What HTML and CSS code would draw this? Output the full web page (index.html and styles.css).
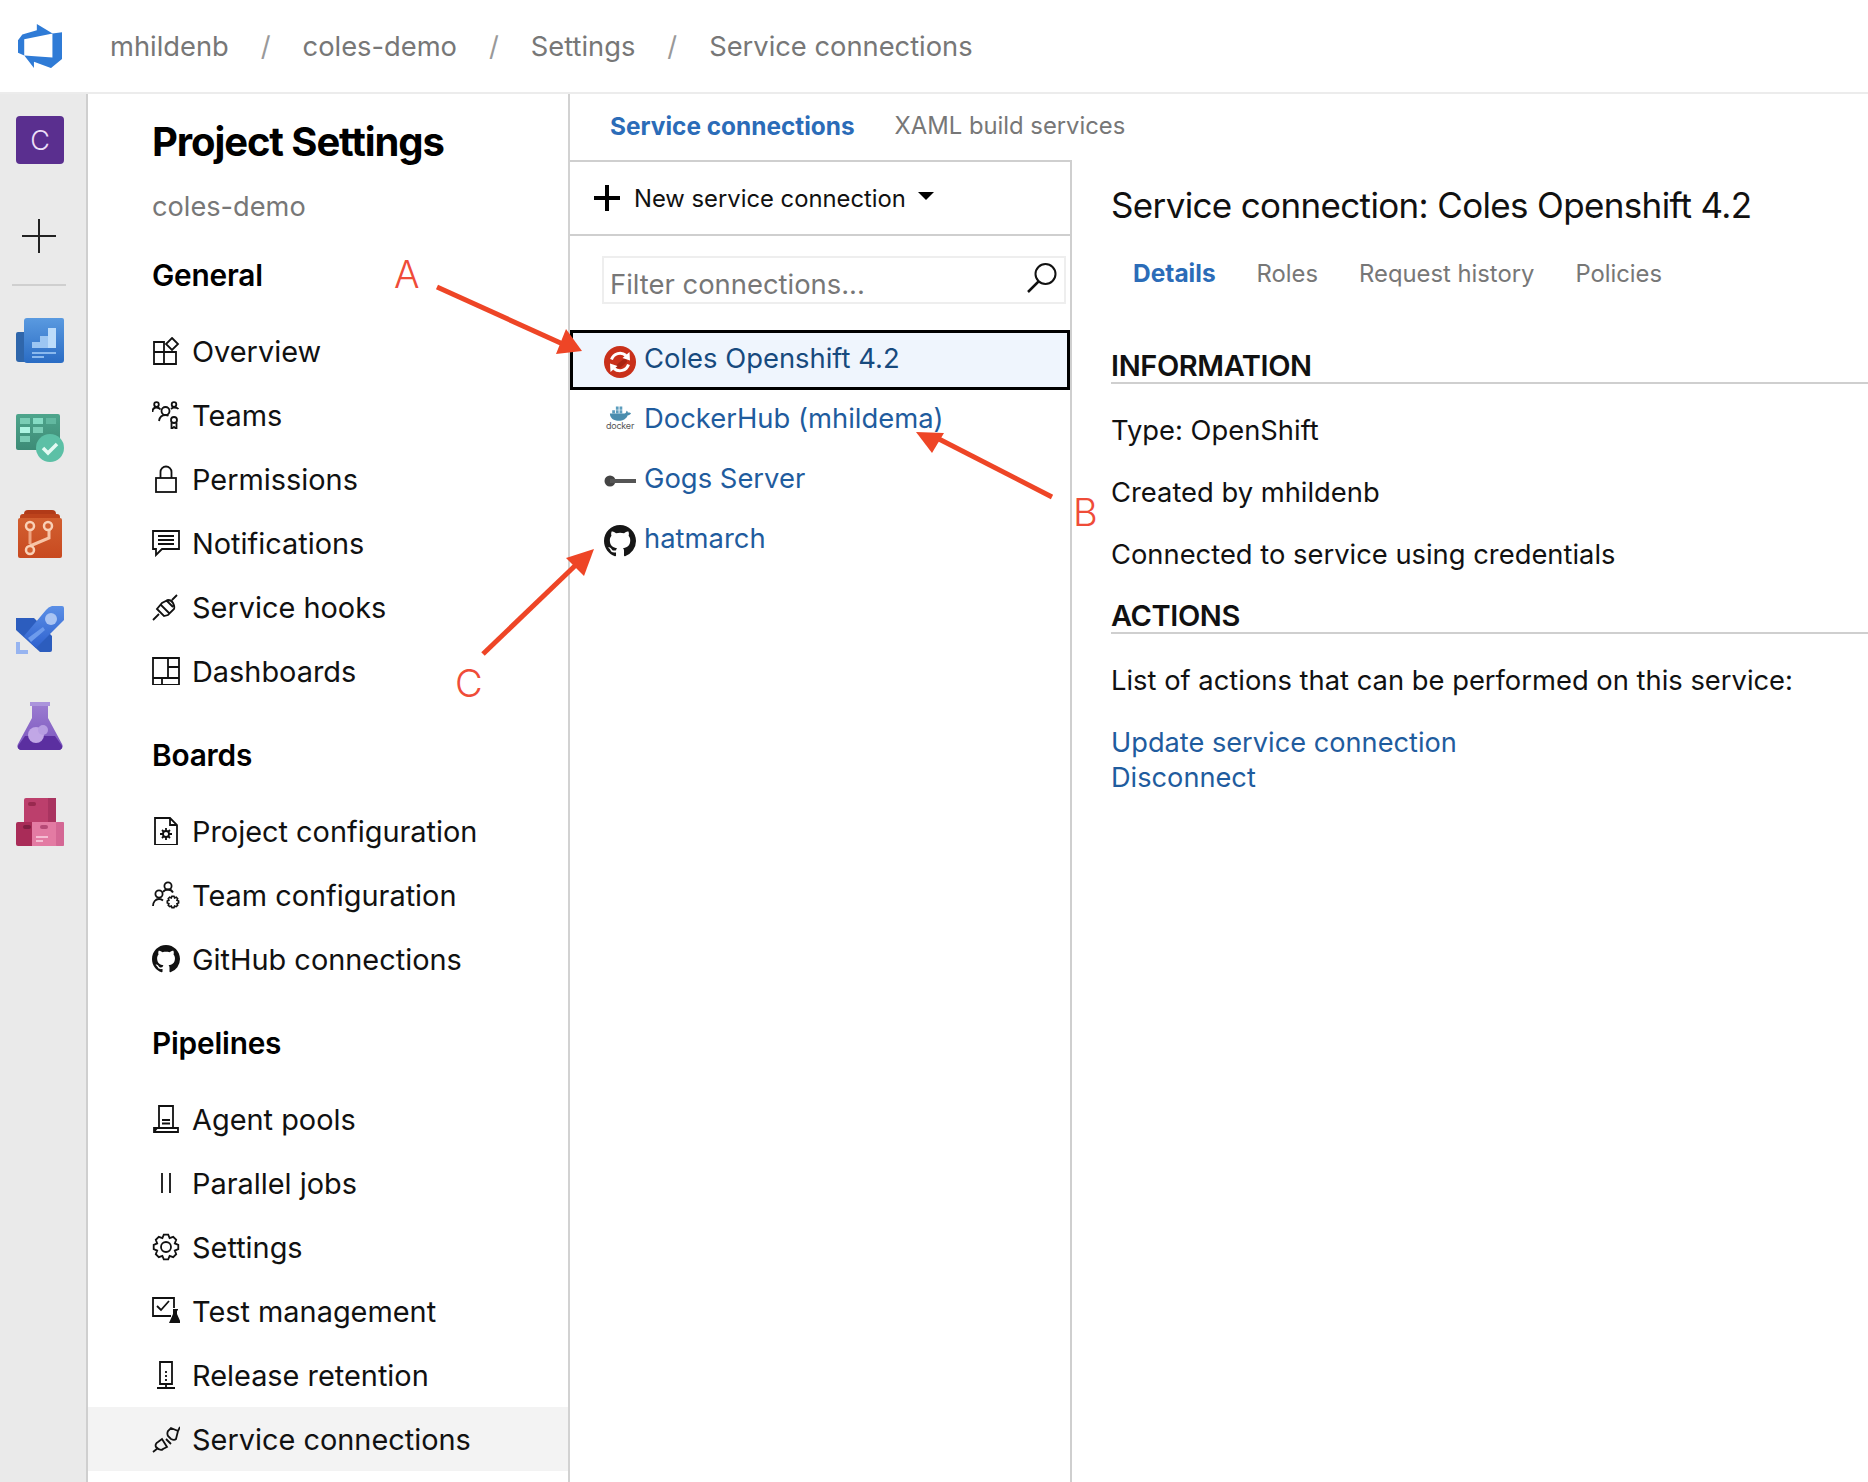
FILE: index.html
```html
<!DOCTYPE html>
<html lang="en">
<head>
<meta charset="utf-8">
<title>Service connections</title>
<link rel="stylesheet" href="styles.css">
</head>
<body>
<svg class="defs" width="0" height="0" aria-hidden="true">
  <defs>
    <path id="gh" d="M8 0C3.58 0 0 3.58 0 8c0 3.54 2.29 6.53 5.47 7.59.4.07.55-.17.55-.38 0-.19-.01-.82-.01-1.49-2.01.37-2.53-.49-2.69-.94-.09-.23-.48-.94-.82-1.13-.28-.15-.68-.52-.01-.53.63-.01 1.08.58 1.23.82.72 1.21 1.87.87 2.33.66.07-.52.28-.87.51-1.07-1.78-.2-3.64-.89-3.64-3.95 0-.87.31-1.59.82-2.15-.08-.2-.36-1.02.08-2.12 0 0 .67-.21 2.2.82.64-.18 1.32-.27 2-.27s1.36.09 2 .27c1.53-1.04 2.2-.82 2.2-.82.44 1.1.16 1.92.08 2.12.51.56.82 1.27.82 2.15 0 3.07-1.87 3.75-3.65 3.95.29.25.54.73.54 1.48 0 1.07-.01 1.93-.01 2.2 0 .21.15.46.55.38A8.01 8.01 0 0016 8c0-4.42-3.58-8-8-8z"/>
    <polygon id="gear" points="26.3,11.8 26.3,16.2 22.8,17.6 24.2,21.2 21.2,24.2 17.6,22.8 16.2,26.3 11.8,26.3 10.4,22.8 6.8,24.2 3.8,21.2 5.2,17.6 1.7,16.2 1.7,11.8 5.2,10.4 3.8,6.8 6.8,3.8 10.4,5.2 11.8,1.7 16.2,1.7 17.6,5.2 21.2,3.8 24.2,6.8 22.8,10.4"/>
    <linearGradient id="gBoards" x1="0" y1="0" x2="0" y2="1"><stop offset="0" stop-color="#5a9ae0"/><stop offset="1" stop-color="#2a6cc4"/></linearGradient>
    <linearGradient id="gTest" x1="0" y1="0" x2="0" y2="1"><stop offset="0" stop-color="#4ea58c"/><stop offset="1" stop-color="#3d8b76"/></linearGradient>
    <linearGradient id="gRepo" x1="0" y1="0" x2="0" y2="1"><stop offset="0" stop-color="#d25f30"/><stop offset="1" stop-color="#c84a20"/></linearGradient>
    <linearGradient id="gPipe" x1="0" y1="0" x2="0" y2="1"><stop offset="0" stop-color="#5b8fe6"/><stop offset="1" stop-color="#2f62cf"/></linearGradient>
    <linearGradient id="gFlask" x1="0" y1="0" x2="0" y2="1"><stop offset="0" stop-color="#9a7ad0"/><stop offset="1" stop-color="#7a55bd"/></linearGradient>
  </defs>
</svg>

<header class="topbar">
  <svg class="logo" viewBox="1 1 16 16" width="44" height="44"><path fill="#2f7bd6" d="M17 4v9.74l-4 3.28-6.2-2.26V17L3.29 12.41l10.23.8V4.44Zm-3.41.49L7.85 1V3.29L2.58 4.84 1 6.87v4.61l2.26 1V6.57Z"/></svg>
  <nav class="crumbs">
    <span>mhildenb</span><span class="slash">/</span>
    <span>coles-demo</span><span class="slash">/</span>
    <span>Settings</span><span class="slash">/</span>
    <span>Service connections</span>
  </nav>
</header>

<div class="app">
  <aside class="rail">
    <div class="tile">C</div>
    <svg class="rail-plus" width="34" height="34" viewBox="0 0 34 34"><path d="M17 0v34M0 17h34" stroke="#222" stroke-width="2" fill="none"/></svg>
    <div class="rail-rule"></div>
    <svg class="rail-icon" width="48" height="48" viewBox="0 0 48 48">
      <path d="M2 14h12v30H3a3 3 0 0 1-3-3V16a2 2 0 0 1 2-2z" fill="#2f66ab"/>
      <path d="M8 3a3 3 0 0 1 3-3h35a2 2 0 0 1 2 2v40a3 3 0 0 1-3 3H11a3 3 0 0 1-3-3z" fill="url(#gBoards)"/>
      <path d="M16 24h8v-6h8v-8h8v20H16z" fill="#bcdcfa"/>
      <path d="M16 24h8v6h-8zM24 18h8v12h-8z" fill="#9cc6f2"/>
      <path d="M16 34h24v2H16zM16 38h12v2H16z" fill="#8ab9ee"/>
    </svg>
    <svg class="rail-icon" width="48" height="48" viewBox="0 0 48 48">
      <rect x="0" y="0" width="44" height="36" rx="2" fill="url(#gTest)"/>
      <g fill="#7acdb5"><rect x="4" y="4" width="10" height="6"/><rect x="17" y="4" width="10" height="6" fill="#86dcc4"/><rect x="30" y="4" width="10" height="6" fill="#62b8a0"/><rect x="17" y="13" width="10" height="6"/><rect x="4" y="22" width="10" height="6"/></g>
      <rect x="4" y="13" width="10" height="6" fill="#aef5e2"/>
      <circle cx="34" cy="34" r="14" fill="#5cc0a6"/>
      <path d="M27 34l5 5 9-9" stroke="#e4faf3" stroke-width="3.5" fill="none"/>
    </svg>
    <svg class="rail-icon" width="48" height="48" viewBox="0 0 48 48">
      <path d="M8 4a4 4 0 0 1 4-4h24a4 4 0 0 1 4 4v4H8z" fill="#b13a18"/>
      <rect x="4" y="4" width="40" height="10" rx="3" fill="#bd431c"/>
      <rect x="2" y="8" width="44" height="40" rx="2" fill="url(#gRepo)"/>
      <path d="M14 20v14" stroke="#eda27f" stroke-width="3" fill="none"/>
      <path d="M33 20v8l-19 8" stroke="#f7c4a6" stroke-width="3" fill="none"/>
      <g fill="#d25f30" stroke="#f9d0b6" stroke-width="2.5"><circle cx="14" cy="16" r="4"/><circle cx="32" cy="16" r="4"/><circle cx="14" cy="40" r="4"/></g>
    </svg>
    <svg class="rail-icon" width="48" height="48" viewBox="0 0 48 48">
      <path d="M0 12h18L36 30v14a2 2 0 0 1-2 2H24L0 24z" fill="#2c5dbe"/>
      <path d="M36 0h10a2 2 0 0 1 2 2v12L20 42 8 30 30 4a10 10 0 0 1 6-4z" fill="url(#gPipe)"/>
      <circle cx="35" cy="13" r="6" fill="#a9c4f3"/>
      <path d="M12 32L27 21l2 3-14 12z" fill="#6d9bec"/>
      <path d="M0 36h4v8h8v4H0z" fill="#97b4f0"/>
    </svg>
    <svg class="rail-icon" width="48" height="48" viewBox="0 0 48 48">
      <rect x="14" y="0" width="20" height="4" fill="#ab94dc"/>
      <path d="M16 4h16v12l14 26a4 4 0 0 1-3.5 6H5.5A4 4 0 0 1 2 42l14-26z" fill="url(#gFlask)"/>
      <path d="M9 34h30l7 10a3 3 0 0 1-3 4H5a3 3 0 0 1-3-4z" fill="#5b2fa0"/>
      <circle cx="20" cy="33" r="8" fill="#c1a7e6"/>
      <circle cx="27" cy="28" r="5" fill="#b79de2"/>
    </svg>
    <svg class="rail-icon" width="48" height="48" viewBox="0 0 48 48">
      <path d="M8 2a2 2 0 0 1 2-2h28a2 2 0 0 1 2 2v26H8z" fill="#bc3f6c"/>
      <rect x="32" y="0" width="8" height="26" fill="#a93460"/>
      <rect x="12" y="4" width="8" height="4" rx="2" fill="#99294f"/>
      <path d="M0 26a2 2 0 0 1 2-2h16v24H2a2 2 0 0 1-2-2z" fill="#a92c58"/>
      <path d="M16 24h30a2 2 0 0 1 2 2v20a2 2 0 0 1-2 2H16z" fill="#e37ba3"/>
      <rect x="40" y="24" width="8" height="24" rx="1" fill="#d46794"/>
      <rect x="7" y="27" width="8" height="4" rx="2" fill="#7f1f42"/>
      <rect x="24" y="27" width="8" height="4" rx="2" fill="#b54a76"/>
      <path d="M20 38h12v2H20zM20 42h7v2h-7z" fill="#f5bdd3"/>
    </svg>
  </aside>

  <aside class="sidebar">
    <h1 class="side-title">Project Settings</h1>
    <div class="side-sub">coles-demo</div>

    <section class="group group-first">
      <h2 class="group-head">General</h2>
      <a class="item"><svg class="ico" viewBox="0 0 28 28"><path d="M2 5h10v10h12v12H2zM2 15h10v12M20 1l6 6-6 6-6-6z"/></svg>Overview</a>
      <a class="item"><svg class="ico" viewBox="0 0 28 28"><circle cx="4.500" cy="3.500" r="2.300"/><circle cx="22" cy="3.500" r="2.300"/><circle cx="13.500" cy="10" r="4"/><circle cx="22" cy="19" r="3"/><path d="M0.500 11c0-3 1.500-4.500 4-4.500 2 0 3 .7 4 2M26.500 8c-1-1.200-2.500-1.500-4.500-1.500-1.500 0-2 .5-3 1.500M7 20c.5-3.500 3-6 6.500-6 1 0 2 .2 3 .7M19.500 21.500V28l2.500-2 2.500 2v-6.500"/></svg>Teams</a>
      <a class="item"><svg class="ico" viewBox="0 0 28 28"><rect x="4" y="13" width="20" height="14"/><path d="M8.500 13V7a5.500 5.500 0 0 1 11 0v6"/></svg>Permissions</a>
      <a class="item"><svg class="ico" viewBox="0 0 28 28"><path d="M1 2h26v18H10l-6 6v-6H1zM6 7h16M6 11h16M6 15h16"/></svg>Notifications</a>
      <a class="item"><svg class="ico" viewBox="0 0 28 28"><path d="M1 27l6-6M25 2l-5 5M5 16l7 7 4-1 6-6c1-2 0-4-1-6-1-2-3-3-5-3l-6 3zM9 12l8 8M14 7l7 7"/></svg>Service hooks</a>
      <a class="item"><svg class="ico" viewBox="0 0 28 28"><path d="M1 1h26v27H1zM16 1v20M16 10h11M1 21h26M10 21v7"/></svg>Dashboards</a>
    </section>

    <section class="group">
      <h2 class="group-head">Boards</h2>
      <a class="item"><svg class="ico" viewBox="0 0 28 28"><path d="M3 1h15l7 7v20H3zM18 1v7h7"/><circle cx="14" cy="17" r="3"/><path d="M14 11v3M14 20v3M8 17h3M17 17h3M10 13l2 2M16 19l2 2M18 13l-2 2M12 19l-2 2"/></svg>Project configuration</a>
      <a class="item"><svg class="ico" viewBox="0 0 28 28"><circle cx="16" cy="5" r="3.600"/><circle cx="7" cy="13" r="3.600"/><path d="M1 25c0-4 2.500-7 6-7 1.500 0 3 .5 4 1.500M11 11c1-1.500 3-2.500 5-2.500s4 1 5 3"/><use href="#gear" transform="translate(14.500 14.500) scale(.46)" stroke-width="3.500"/></svg>Team configuration</a>
      <a class="item"><svg class="ico ico-fill" viewBox="0 0 16 16"><use href="#gh"/></svg>GitHub connections</a>
    </section>

    <section class="group">
      <h2 class="group-head">Pipelines</h2>
      <a class="item"><svg class="ico" viewBox="0 0 28 28"><path d="M7 1h14v22H7zM2 27h24v-4H2zM2 27l3-4M10 15h8M10 18.500h8"/></svg>Agent pools</a>
      <a class="item"><svg class="ico" viewBox="0 0 28 28"><path d="M10 4v20M18 4v20"/></svg>Parallel jobs</a>
      <a class="item"><svg class="ico" viewBox="0 0 28 28"><use href="#gear"/><circle cx="14" cy="14" r="5"/></svg>Settings</a>
      <a class="item"><svg class="ico" viewBox="0 0 28 28"><path d="M19 19H1V1h21v10M5 9l4 4 8-9"/><path class="solid" d="M21 12h5v1.500h-1V17l4 9H17l4-9v-3.500z"/></svg>Test management</a>
      <a class="item"><svg class="ico" viewBox="0 0 28 28"><path d="M8 1h12v22H8zM5 27h18M14 23v4M14 10v2M14 14v2M14 18v2"/></svg>Release retention</a>
      <a class="item active"><svg class="ico" viewBox="0 0 28 28"><path d="M1 27l5-4M4 22c-1-2 0-4 2-5l4-3 5 8-4 2c-2 2-5 0-7-2zM14 14l5 5M19 3l7 3-2 8c-1 1-3 1-5 0l-3-3c-1-2-1-3 0-5zM26 6l2-4"/></svg>Service connections</a>
    </section>
  </aside>

  <main class="main">
    <div class="top-tabs">
      <a class="tab-on">Service connections</a>
      <a class="tab-off">XAML build services</a>
    </div>
    <div class="panes">
      <section class="list">
        <div class="toolbar">
          <svg class="tool-plus" width="26" height="26" viewBox="0 0 26 26"><path d="M13 0v26M0 13h26" stroke="#000" stroke-width="4"/></svg>
          <span class="tool-label">New service connection</span>
          <span class="caret"></span>
        </div>
        <div class="filter-wrap">
          <div class="filter">
            <span class="filter-text">Filter connections...</span>
            <svg width="30" height="30" viewBox="0 0 30 30" class="filter-ico"><circle cx="18.500" cy="11" r="10" fill="none" stroke="#111" stroke-width="2"/><path d="M11.500 18.500L1 29" stroke="#111" stroke-width="2.500"/></svg>
          </div>
        </div>
        <a class="conn selected">
          <svg class="conn-ico" viewBox="0 0 32 32"><circle cx="16" cy="16" r="16" fill="#c9301a"/><path d="M16 16l7-6v6l-7 6-7 0z" fill="#a92412"/><path d="M7.500 13.500A9 9 0 0 1 22 9.500" fill="none" stroke="#fff" stroke-width="3"/><path d="M24.500 18.500A9 9 0 0 1 10 22.500" fill="none" stroke="#fff" stroke-width="3"/><path d="M25.500 6l.5 8.500-7.500-2.500zM6.500 26l-.5-8.500 7.500 2.500z" fill="#fff"/></svg>
          Coles Openshift 4.2
        </a>
        <a class="conn">
          <span class="docker">
            <svg viewBox="0 0 24 17" width="22" height="16"><path d="M1 9h16c1 0 2-1 2-3 1 0 1.500 1 1.500 2 1 0 3-.2 3.500 1-1 1-2 2-3.500 2-1.500 4-5.500 6-9.500 6-6 0-10-3-10-8z" fill="#4a8dae"/><path d="M3.500 5.500h3V9h-3zM7.500 5.500h3V9h-3zM11.500 5.500h3V9h-3zM7.500 1.500h3V5h-3zM11.500 1.500h3V5h-3z" fill="#5c9dbd"/></svg>
            <span class="docker-word">docker</span>
          </span>
          DockerHub (mhildema)
        </a>
        <a class="conn">
          <svg class="conn-ico gogs" viewBox="0 0 32 32"><circle cx="6" cy="16" r="5.500" fill="#444"/><rect x="6" y="14" width="26" height="4" fill="#555"/></svg>
          Gogs Server
        </a>
        <a class="conn">
          <svg class="conn-ico" viewBox="0 0 16 16"><use href="#gh" fill="#161616"/></svg>
          hatmarch
        </a>
      </section>
      <section class="detail">
        <h2 class="detail-title">Service connection: Coles Openshift 4.2</h2>
        <div class="detail-tabs">
          <a class="tab-on">Details</a>
          <a class="tab-off">Roles</a>
          <a class="tab-off">Request history</a>
          <a class="tab-off">Policies</a>
        </div>
        <h3 class="detail-head">INFORMATION</h3>
        <p class="line">Type: OpenShift</p>
        <p class="line">Created by mhildenb</p>
        <p class="line">Connected to service using credentials</p>
        <h3 class="detail-head detail-head-2">ACTIONS</h3>
        <p class="line line-gap">List of actions that can be performed on this service:</p>
        <div class="links">
          <a>Update service connection</a>
          <a>Disconnect</a>
        </div>
      </section>
    </div>
  </main>
</div>

<svg class="marks" width="1868" height="1482" viewBox="0 0 1868 1482">
  <g stroke="#ee4526" stroke-width="5" fill="#ee4526">
    <path d="M437 287L565 345"/>
    <path d="M582 351L556 354L566 329z" stroke="none"/>
    <path d="M1052 497L935 437"/>
    <path d="M916 432L944 433L932 453z" stroke="none"/>
    <path d="M483 654L580 561"/>
    <path d="M594 549L584 576L566 558z" stroke="none"/>
  </g>
  <g class="mark-text">
    <text x="394" y="288">A</text>
    <text x="1073" y="526">B</text>
    <text x="455" y="697">C</text>
  </g>
</svg>
</body>
</html>
```
FILE: styles.css
```css
* { box-sizing: border-box; }
html, body { margin: 0; height: 1482px; overflow: hidden; background: #fff; }
body { font-family: Inter, "Liberation Sans", sans-serif; color: #111; position: relative; }
a { color: inherit; text-decoration: none; }
h1, h2, h3, p { margin: 0; }
.defs { position: absolute; }

.topbar { height: 94px; border-bottom: 2px solid #ececec; display: flex; align-items: center; padding-left: 18px; }
.logo { flex: none; }
.crumbs { margin-left: 48px; display: flex; align-items: center; gap: 32px; font-size: 27.300px; color: #777; }
.slash { color: #999; }

.app { display: flex; height: 1388px; }
.rail { width: 88px; flex: none; background: #eaeaea; border-right: 2px solid #cfcfcf; display: flex; flex-direction: column; align-items: flex-start; padding: 22px 0 0 16px; }
.tile { width: 48px; height: 48px; background: #5a2f8f; border-radius: 4px; color: #ecdff8; font-size: 27px; font-weight: 300; display: flex; align-items: center; justify-content: center; }
.rail-plus { margin: 55px 0 0 6px; }
.rail-rule { width: 54px; height: 2px; background: #cfcfcf; margin: 31px 0 32px -4px; }
.rail-icon { margin-bottom: 48px; flex: none; }

.sidebar { width: 482px; flex: none; border-right: 2px solid #d2d2d2; }
.side-title { font-size: 40px; font-weight: 700; letter-spacing: -1.100px; color: #000; line-height: 56px; margin: 20px 0 0 64px; }
.side-sub { font-size: 27.200px; color: #777; line-height: 40px; margin: 17px 0 0 64px; }
.group { margin-top: 32px; }
.group-first { margin-top: 28px; }
.group-head { font-size: 29.800px; font-weight: 600; color: #000; line-height: 40px; margin: 0 0 24px 64px; letter-spacing: -.2px; }
.item { display: flex; align-items: center; gap: 12px; height: 64px; padding: 1px 0 0 64px; font-size: 28.900px; color: #111; }
.item.active { background: #f3f3f3; }
.ico { width: 28px; height: 28px; flex: none; fill: none; stroke: #111; stroke-width: 1.8; margin-top: -1px; }
.ico-fill { fill: #111; stroke: none; }
.ico .solid { fill: #111; stroke: none; }

.main { flex: 1; min-width: 0; display: flex; flex-direction: column; }
.top-tabs { height: 66px; display: flex; align-items: center; gap: 40px; padding: 0 0 3px 40px; font-size: 24px; }
.top-tabs .tab-on { font-size: 24.400px; }
.tab-on { color: #2b6cb8; font-weight: 700; }
.tab-off { color: #777; font-size: 23.800px; }
.panes { flex: 1; display: flex; min-height: 0; }

.list { width: 502px; flex: none; border-top: 2px solid #cfcfcf; border-right: 2px solid #cfcfcf; }
.toolbar { height: 74px; border-bottom: 2px solid #cfcfcf; display: flex; align-items: center; padding-left: 24px; font-size: 23.800px; color: #111; }
.tool-label { margin-left: 14px; }
.caret { width: 0; height: 0; border: 8px solid transparent; border-top: 8px solid #000; border-bottom: 0; margin-left: 12px; margin-top: -4px; }
.filter-wrap { padding: 20px 4px 26px 32px; }
.filter { height: 48px; border: 2px solid #eee; display: flex; align-items: center; justify-content: space-between; padding: 0 7px 0 6px; }
.filter-text { font-size: 27.400px; color: #777; padding-top: 7px; }
.filter-ico { margin-top: -4px; }
.conn { display: flex; align-items: center; gap: 8px; height: 60px; padding: 0 0 0 34px; font-size: 27.400px; color: #1f5c9e; }
.conn.selected { border: 3px solid #000; background: #eff5fd; color: #174a7e; padding: 0 0 5px 31px; margin-bottom: -2px; }
.conn-ico { width: 32px; height: 32px; flex: none; margin-top: 6px; }
.selected .conn-ico { margin-top: 8px; }
.gogs { filter: blur(.6px); }
.docker { width: 32px; height: 32px; flex: none; display: flex; flex-direction: column; align-items: center; margin-top: 6px; }
.docker-word { font-size: 9px; line-height: 9px; color: #555; letter-spacing: -.2px; }

.detail { flex: 1; min-width: 0; padding: 0 0 0 39px; }
.detail-title { font-size: 35px; font-weight: 400; line-height: 44px; color: #111; margin-top: 23px; letter-spacing: -.650px; }
.detail-tabs { display: flex; gap: 41px; padding-left: 22px; font-size: 24px; margin-top: 29px; line-height: 34px; align-items: baseline; }
.detail-tabs .tab-on { font-size: 24.500px; }
.detail-head { font-size: 29px; font-weight: 600; line-height: 37px; color: #111; border-bottom: 2px solid #cfcfcf; margin-top: 56px; letter-spacing: -.400px; height: 37px; }
.detail-head-2 { margin-top: 11px; }
.line { font-size: 27.350px; line-height: 62px; color: #111; }
.line:first-of-type { margin-top: 16px; }
.line.line-gap { margin-top: 16px; }
.links { display: flex; flex-direction: column; font-size: 27.200px; line-height: 34.500px; color: #1f5c9e; margin-top: 14px; }

.marks { position: absolute; left: 0; top: 0; pointer-events: none; }
.mark-text text { font-family: Inter, sans-serif; font-size: 38px; font-weight: 300; fill: #ef4c38; }
```
